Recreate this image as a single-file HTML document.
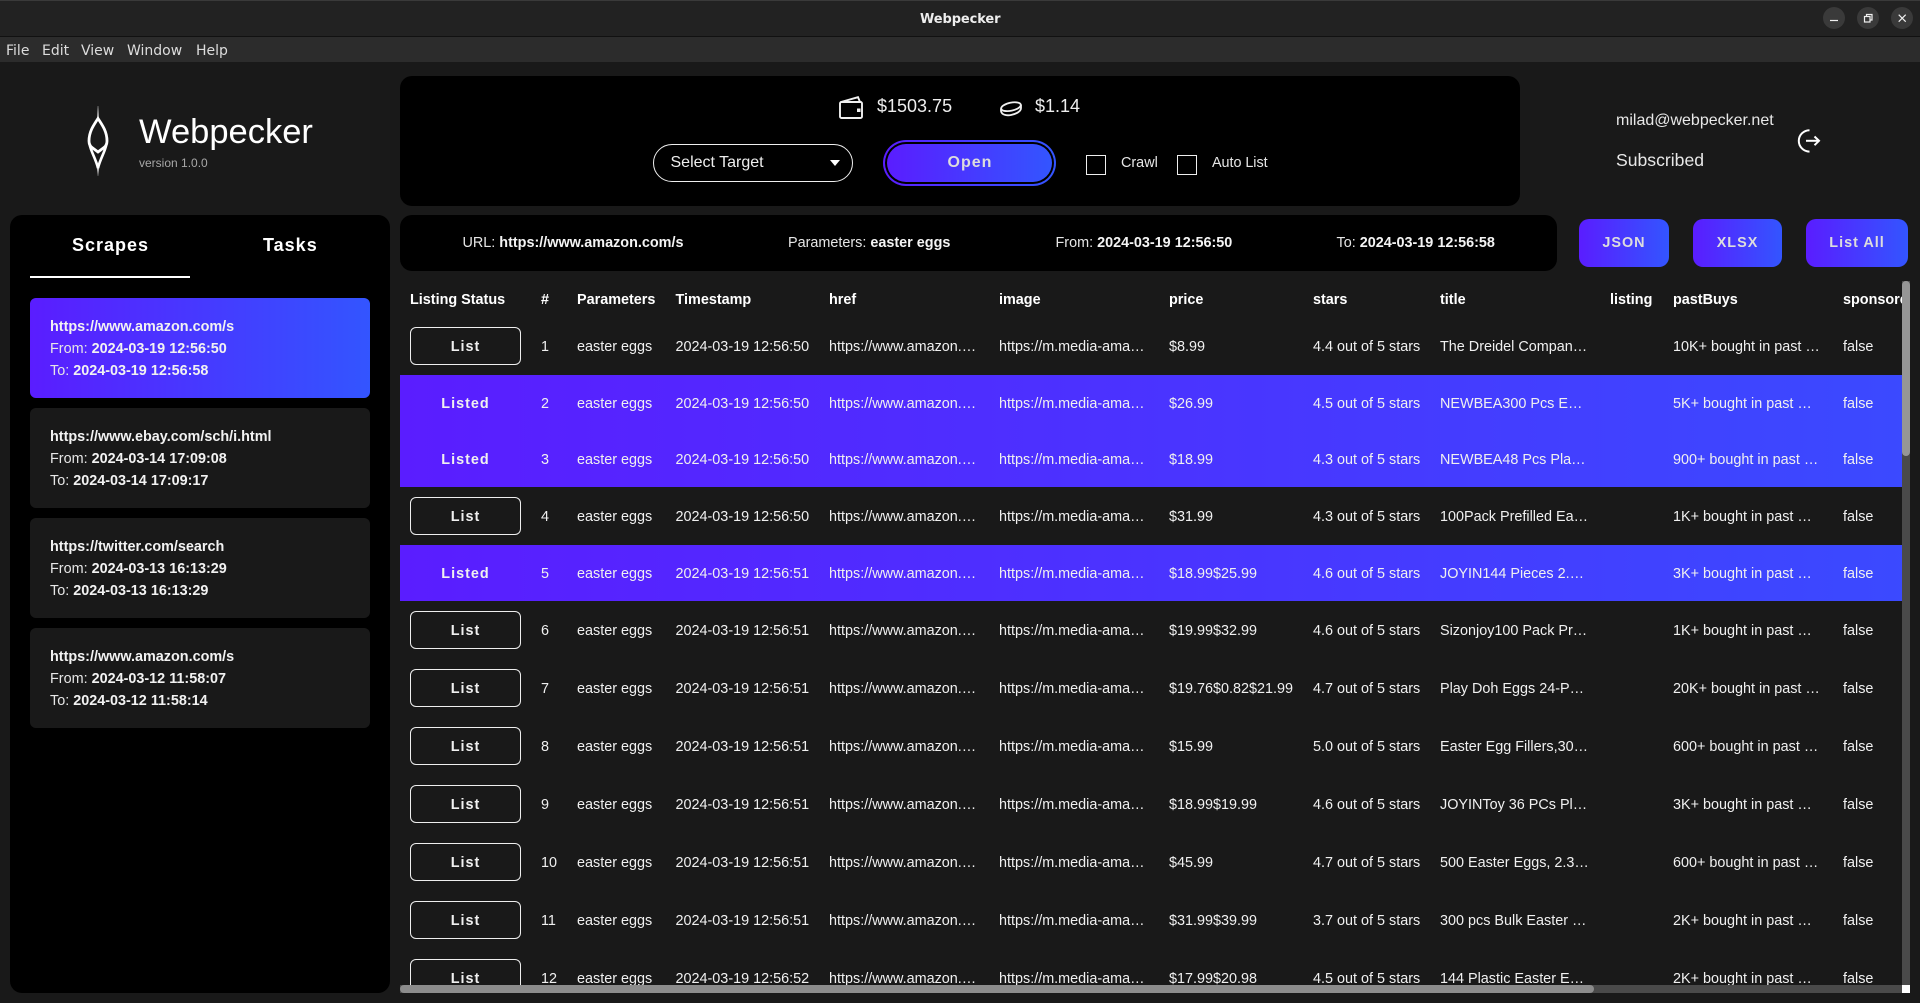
<!DOCTYPE html>
<html lang="en"><head><meta charset="utf-8"><title>Webpecker</title>
<style>
*{box-sizing:border-box;margin:0;padding:0}
html,body{width:1920px;height:1003px;overflow:hidden;background:#191919;color:#f0f0f0;font:14.4px "Liberation Sans",sans-serif}
.a{position:absolute;white-space:nowrap}
.p{position:absolute;background:#000;border-radius:12px}
.g{background:linear-gradient(90deg,#5a1dff,#3355ff)}
.m{position:absolute;top:42px;font:14px/18px "DejaVu Sans",sans-serif;color:#ddd}
.btn{position:absolute;top:219px;height:48px;border-radius:10px;font-weight:700;letter-spacing:1px;line-height:49px;text-align:center;color:#ddd}
.tab{position:absolute;top:234px;font-size:18px;line-height:22px;font-weight:700;letter-spacing:1px;color:#fff}
.card{position:absolute;left:30px;width:340px;height:100px;border-radius:6px;background:#191919;padding:18px 20px 0;line-height:22px;color:#e6e6e6}
.card.g{background:linear-gradient(90deg,#5a1dff,#3355ff)}
.card b{color:#f2f2f2}
.wb{position:absolute;top:7px;width:22px;height:22px;border-radius:50%;background:#3a3a3a}
#t{position:absolute;left:400px;top:281px;width:1502px;height:704px;overflow:hidden}
.r{position:absolute;left:0;width:1890px;height:58px;line-height:58px}
.r.l{height:56px;line-height:56px;background:linear-gradient(90deg,#5a1dff,#3355ff)}
.r span{position:absolute;top:1px;white-space:nowrap}
.r span:nth-child(1){left:10px;width:111px;text-align:center;font-weight:700;letter-spacing:1px}
.r span:nth-child(2){left:141px}
.r span:nth-child(3){left:177px}
.r span:nth-child(4){left:275.5px}
.r span:nth-child(5){left:429px}
.r span:nth-child(6){left:599px}
.r span:nth-child(7){left:769px}
.r span:nth-child(8){left:913px}
.r span:nth-child(9){left:1040px}
.r span:nth-child(10){left:1273px}
.r span:nth-child(11){left:1443px}
.r i{position:absolute;left:10px;top:10px;width:111px;height:38px;border:1px solid #eee;border-radius:6px;font-style:normal;line-height:38px;text-align:center;font-weight:700;letter-spacing:1px}
.h{position:absolute;left:0;top:0;width:1890px;height:36px;line-height:38px;font-weight:700;color:#fff}
.h span{position:absolute;top:0;white-space:nowrap}
</style></head><body>

<div class="a" style="left:0;top:0;width:1920px;height:37px;background:#222;border-top:1px solid #3a3a3a;border-bottom:1px solid #111"></div>
<div class="a" style="left:0;top:37px;width:1920px;height:25px;background:#2c2c2c"></div>
<div class="a" style="left:920px;top:11px;font:700 13px/17px 'DejaVu Sans',sans-serif;color:#eee;letter-spacing:-.1px">Webpecker</div>
<div class="m" style="left:6px">File</div><div class="m" style="left:42px">Edit</div><div class="m" style="left:81px">View</div><div class="m" style="left:127px">Window</div><div class="m" style="left:196px">Help</div>
<div class="wb" style="left:1823px"></div><div class="wb" style="left:1857px"></div><div class="wb" style="left:1891px"></div>
<svg class="a" style="left:1820px;top:0" width="100" height="36" viewBox="0 0 100 36" fill="none" stroke="#f0f0f0" stroke-width="1.2"><path d="M10 20.5H18"/><rect x="44.5" y="16.5" width="5.5" height="5.5"/><path d="M46.5 16.5V14.5H52V20H50"/><path d="M78.7 14.7L85.7 21.7M85.7 14.7L78.7 21.7"/></svg>

<svg class="a" style="left:60px;top:90px" width="120" height="100" viewBox="0 0 120 100" fill="none" stroke="#fff">
<defs><linearGradient id="f1" x1="0" y1="0" x2="0" y2="1"><stop offset="0" stop-color="#fff" stop-opacity="0.2"/><stop offset="1" stop-color="#fff"/></linearGradient><linearGradient id="f2" x1="0" y1="0" x2="0" y2="1"><stop offset="0" stop-color="#fff"/><stop offset="1" stop-color="#fff" stop-opacity="0.2"/></linearGradient></defs>
<path d="M37.2 16H38.8V30H37.2Z" fill="url(#f1)" stroke="none"/>
<path d="M38 28.5C33 36 29 42 29 51C29 54 30 56 32 57.5L38 62L44 57.5C46 56 47 54 47 51C47 42 43 36 38 28.5Z" stroke-width="2.8"/>
<path d="M29.5 54C31 62 35.5 68 38 78C40.5 68 45 62 46.5 54" stroke-width="2.6"/>
<path d="M36.8 76H39.2L38.6 86H37.4Z" fill="url(#f2)" stroke="none"/>
</svg>
<div class="a" style="left:139px;top:111px;font-size:34.5px;line-height:42px;color:#fff;">Webpecker</div>
<div class="a" style="left:139px;top:156px;font-size:12px;line-height:14px;color:#a8a8a8">version 1.0.0</div>

<div class="p" style="left:400px;top:76px;width:1120px;height:130px"></div>
<svg class="a" style="left:835px;top:90px" width="40" height="32" viewBox="0 0 40 32" fill="none" stroke="#f0f0f0" stroke-width="1.9"><rect x="5" y="12" width="22" height="16" rx="1.5"/><path d="M6 12L23 7.2L25 12"/><rect x="22" y="18.5" width="3.5" height="3.5" fill="#f0f0f0" stroke="none"/></svg>
<div class="a" style="left:877px;top:96px;font-size:18px;line-height:20px;color:#eee">$1503.75</div>
<svg class="a" style="left:995px;top:95px" width="32" height="28" viewBox="0 0 32 28" fill="none" stroke="#f0f0f0" stroke-width="1.8"><ellipse cx="16" cy="11.7" rx="10" ry="4" transform="rotate(-12 16 11.7)"/><path d="M6 13.5V16C6.5 19.5 11 21 16 20C21 19 26 16.5 26 13V9.8"/></svg>
<div class="a" style="left:1035px;top:96px;font-size:18px;line-height:20px;color:#eee">$1.14</div>
<div class="a" style="left:653px;top:144px;width:200px;height:38px;border:1px solid #eee;border-radius:19px"></div>
<div class="a" style="left:670.5px;top:154px;font-size:16px;line-height:18px;color:#eee">Select Target</div>
<div class="a" style="left:829.5px;top:160px;width:0;height:0;border-left:5.5px solid transparent;border-right:5.5px solid transparent;border-top:6px solid #fff"></div>
<div class="a g" style="left:883px;top:140px;width:173px;height:46px;border-radius:23px"></div>
<div class="a" style="left:885px;top:142px;width:169px;height:42px;border-radius:21px;background:#000"></div>
<div class="a g" style="left:887px;top:144px;width:165px;height:38px;border-radius:19px;font-size:16px;font-weight:700;letter-spacing:1px;line-height:38px;text-align:center;color:#ddd;padding-left:1px">Open</div>
<div class="a" style="left:1086px;top:155px;width:20px;height:20px;border:1px solid #eee"></div>
<div class="a" style="left:1121px;top:155px;line-height:16px;color:#e6e6e6">Crawl</div>
<div class="a" style="left:1177px;top:155px;width:20px;height:20px;border:1px solid #eee"></div>
<div class="a" style="left:1212px;top:155px;line-height:16px;color:#e6e6e6;letter-spacing:-.05px">Auto List</div>

<div class="a" style="left:1616px;top:112px;font-size:16px;line-height:18px;color:#e8e8e8">milad@webpecker.net</div>
<div class="a" style="left:1616px;top:150px;font-size:17.6px;line-height:20px;color:#e8e8e8">Subscribed</div>
<svg class="a" style="left:1790px;top:125px" width="36" height="32" viewBox="0 0 36 32" fill="none" stroke="#fff" stroke-width="2"><path d="M19.5 5.2A10.7 10.7 0 1 0 19.5 26.6"/><path d="M16 15.8H29"/><path d="M24.5 11.5L29 15.8L24.5 20.2"/></svg>

<div class="p" style="left:10px;top:215px;width:380px;height:778px"></div>
<div class="tab" style="left:72px">Scrapes</div><div class="tab" style="left:263px">Tasks</div>
<div class="a" style="left:30px;top:276px;width:160px;height:2px;background:#fff"></div>
<div class="card g" style="top:298px"><b>https://www.amazon.com/s</b><br>From: <b>2024-03-19 12:56:50</b><br>To: <b>2024-03-19 12:56:58</b></div>
<div class="card" style="top:408px"><b>https://www.ebay.com/sch/i.html</b><br>From: <b>2024-03-14 17:09:08</b><br>To: <b>2024-03-14 17:09:17</b></div>
<div class="card" style="top:518px"><b>https://twitter.com/search</b><br>From: <b>2024-03-13 16:13:29</b><br>To: <b>2024-03-13 16:13:29</b></div>
<div class="card" style="top:628px"><b>https://www.amazon.com/s</b><br>From: <b>2024-03-12 11:58:07</b><br>To: <b>2024-03-12 11:58:14</b></div>

<div class="p" style="left:400px;top:215px;width:1157px;height:56px"></div>
<div class="a" style="left:462.5px;top:235px;line-height:17px;color:#e6e6e6">URL: <b style="color:#f4f4f4">https://www.amazon.com/s</b></div>
<div class="a" style="left:788px;top:235px;line-height:17px;color:#e6e6e6">Parameters: <b style="color:#f4f4f4">easter eggs</b></div>
<div class="a" style="left:1055.5px;top:235px;line-height:17px;color:#e6e6e6">From: <b style="color:#f4f4f4">2024-03-19 12:56:50</b></div>
<div class="a" style="left:1336.5px;top:235px;line-height:17px;color:#e6e6e6">To: <b style="color:#f4f4f4">2024-03-19 12:56:58</b></div>
<div class="btn g" style="left:1579px;width:90px">JSON</div>
<div class="btn g" style="left:1693px;width:89px">XLSX</div>
<div class="btn g" style="left:1806px;width:102px">List All</div>

<div id="t">
<div class="h"><span style="left:10px">Listing Status</span><span style="left:141px">#</span><span style="left:177px">Parameters</span><span style="left:275.5px">Timestamp</span><span style="left:429px">href</span><span style="left:599px">image</span><span style="left:769px">price</span><span style="left:913px">stars</span><span style="left:1040px">title</span><span style="left:1210px">listing</span><span style="left:1273px">pastBuys</span><span style="left:1443px">sponsored</span></div>
<div class="r" style="top:36px"><i>List</i><span>1</span><span>easter eggs</span><span>2024-03-19 12:56:50</span><span>https://www.amazon.…</span><span>https://m.media-ama…</span><span>$8.99</span><span>4.4 out of 5 stars</span><span>The Dreidel Compan…</span><span>10K+ bought in past …</span><span>false</span></div>
<div class="r l" style="top:94px"><span>Listed</span><span>2</span><span>easter eggs</span><span>2024-03-19 12:56:50</span><span>https://www.amazon.…</span><span>https://m.media-ama…</span><span>$26.99</span><span>4.5 out of 5 stars</span><span>NEWBEA300 Pcs E…</span><span>5K+ bought in past …</span><span>false</span></div>
<div class="r l" style="top:150px"><span>Listed</span><span>3</span><span>easter eggs</span><span>2024-03-19 12:56:50</span><span>https://www.amazon.…</span><span>https://m.media-ama…</span><span>$18.99</span><span>4.3 out of 5 stars</span><span>NEWBEA48 Pcs Pla…</span><span>900+ bought in past …</span><span>false</span></div>
<div class="r" style="top:206px"><i>List</i><span>4</span><span>easter eggs</span><span>2024-03-19 12:56:50</span><span>https://www.amazon.…</span><span>https://m.media-ama…</span><span>$31.99</span><span>4.3 out of 5 stars</span><span>100Pack Prefilled Ea…</span><span>1K+ bought in past …</span><span>false</span></div>
<div class="r l" style="top:264px"><span>Listed</span><span>5</span><span>easter eggs</span><span>2024-03-19 12:56:51</span><span>https://www.amazon.…</span><span>https://m.media-ama…</span><span>$18.99$25.99</span><span>4.6 out of 5 stars</span><span>JOYIN144 Pieces 2.…</span><span>3K+ bought in past …</span><span>false</span></div>
<div class="r" style="top:320px"><i>List</i><span>6</span><span>easter eggs</span><span>2024-03-19 12:56:51</span><span>https://www.amazon.…</span><span>https://m.media-ama…</span><span>$19.99$32.99</span><span>4.6 out of 5 stars</span><span>Sizonjoy100 Pack Pr…</span><span>1K+ bought in past …</span><span>false</span></div>
<div class="r" style="top:378px"><i>List</i><span>7</span><span>easter eggs</span><span>2024-03-19 12:56:51</span><span>https://www.amazon.…</span><span>https://m.media-ama…</span><span>$19.76$0.82$21.99</span><span>4.7 out of 5 stars</span><span>Play Doh Eggs 24-P…</span><span>20K+ bought in past …</span><span>false</span></div>
<div class="r" style="top:436px"><i>List</i><span>8</span><span>easter eggs</span><span>2024-03-19 12:56:51</span><span>https://www.amazon.…</span><span>https://m.media-ama…</span><span>$15.99</span><span>5.0 out of 5 stars</span><span>Easter Egg Fillers,30…</span><span>600+ bought in past …</span><span>false</span></div>
<div class="r" style="top:494px"><i>List</i><span>9</span><span>easter eggs</span><span>2024-03-19 12:56:51</span><span>https://www.amazon.…</span><span>https://m.media-ama…</span><span>$18.99$19.99</span><span>4.6 out of 5 stars</span><span>JOYINToy 36 PCs Pl…</span><span>3K+ bought in past …</span><span>false</span></div>
<div class="r" style="top:552px"><i>List</i><span>10</span><span>easter eggs</span><span>2024-03-19 12:56:51</span><span>https://www.amazon.…</span><span>https://m.media-ama…</span><span>$45.99</span><span>4.7 out of 5 stars</span><span>500 Easter Eggs, 2.3…</span><span>600+ bought in past …</span><span>false</span></div>
<div class="r" style="top:610px"><i>List</i><span>11</span><span>easter eggs</span><span>2024-03-19 12:56:51</span><span>https://www.amazon.…</span><span>https://m.media-ama…</span><span>$31.99$39.99</span><span>3.7 out of 5 stars</span><span>300 pcs Bulk Easter …</span><span>2K+ bought in past …</span><span>false</span></div>
<div class="r" style="top:668px"><i>List</i><span>12</span><span>easter eggs</span><span>2024-03-19 12:56:52</span><span>https://www.amazon.…</span><span>https://m.media-ama…</span><span>$17.99$20.98</span><span>4.5 out of 5 stars</span><span>144 Plastic Easter E…</span><span>2K+ bought in past …</span><span>false</span></div>
</div>

<div class="a" style="left:1902px;top:281px;width:8px;height:704px;background:#4a4a4a"></div>
<div class="a" style="left:1902px;top:281px;width:8px;height:175px;background:#969696;border-radius:4px"></div>
<div class="a" style="left:400px;top:985px;width:1502px;height:8px;background:#4a4a4a"></div>
<div class="a" style="left:400px;top:985px;width:1194px;height:8px;background:#8c8c8c;border-radius:4px"></div>
<div class="a" style="left:1902px;top:985px;width:8px;height:8px;background:#fff"></div>
</body></html>
